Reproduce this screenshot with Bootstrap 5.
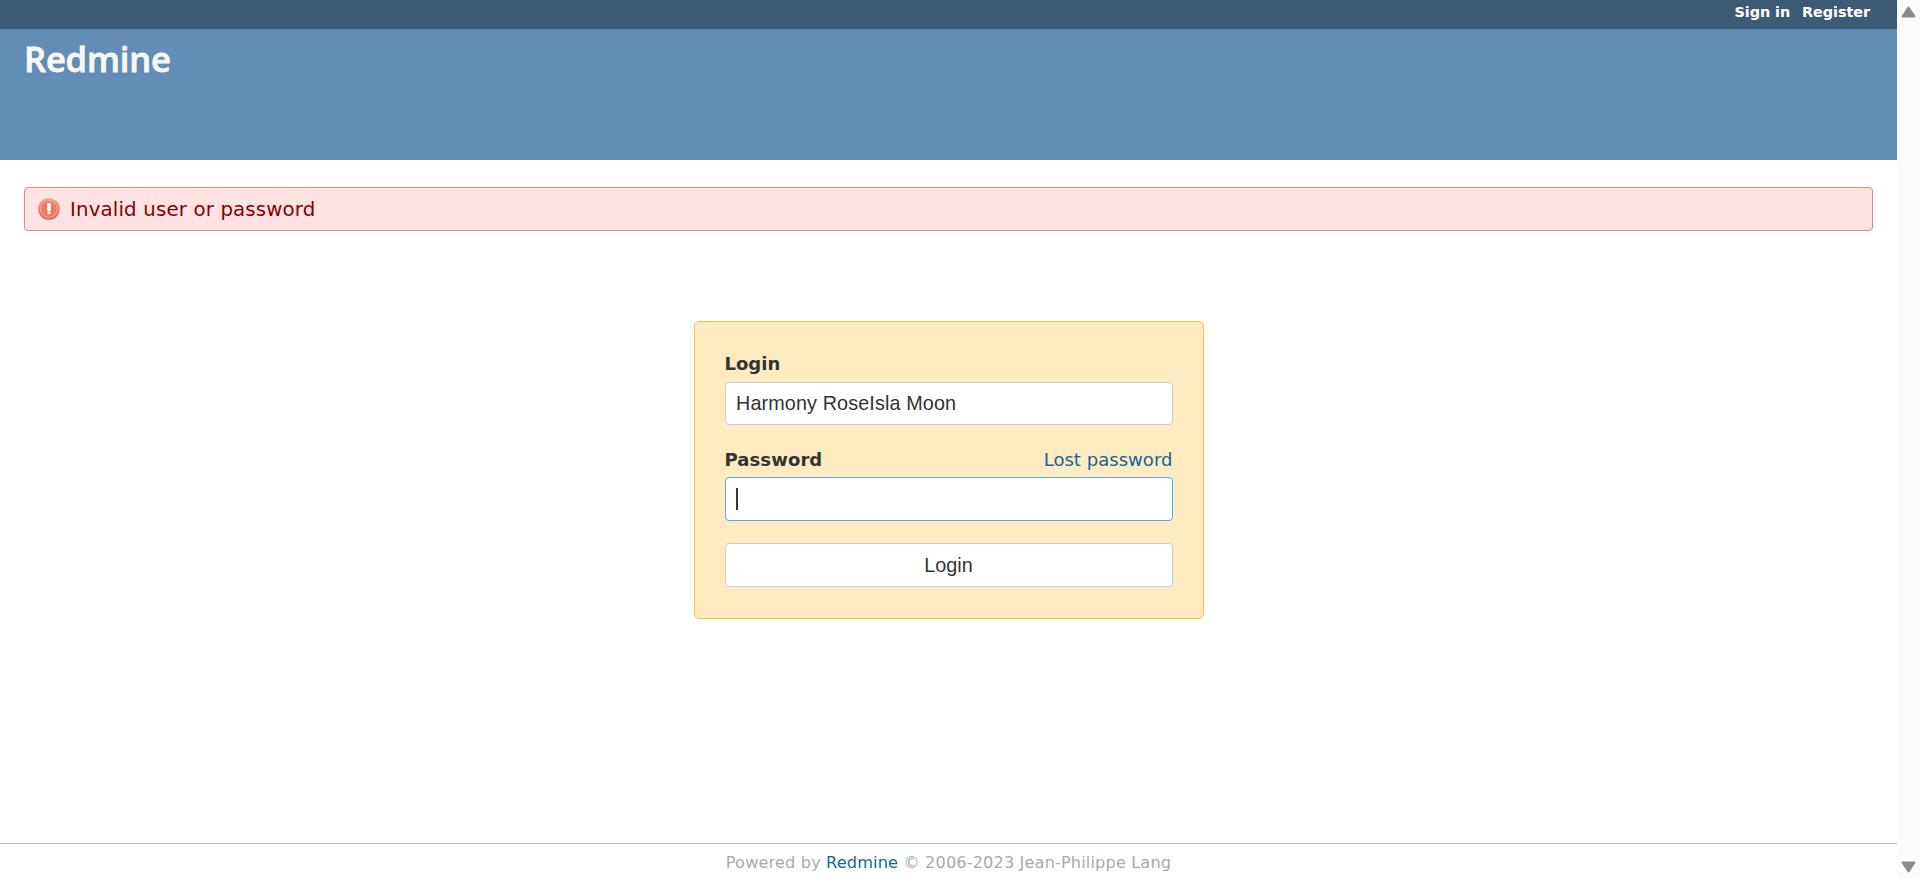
<!DOCTYPE html>
<html lang="en">
<head>
<meta charset="utf-8">
<title>Redmine</title>
<link href="https://cdn.jsdelivr.net/npm/bootstrap@5.3.0/dist/css/bootstrap.min.css" rel="stylesheet">
<style>
body{font:18px/1.25 Verdana,"DejaVu Sans",sans-serif;color:#333;overflow:hidden}
a{color:#169;text-decoration:none}
.top-menu{height:29px;background:#3e5b76;font-size:14.4px;font-weight:700;line-height:18px;padding:3px 27px 0;gap:12px;letter-spacing:-.06px}
.top-menu a{color:#fff}
.site-head{height:131px;background:#628db6;padding:5px 24px 0}
.site-head h1{font:600 34.5px/50px "Open Sans",sans-serif;color:#f8f8f8;letter-spacing:-.15px;-webkit-text-stroke:.8px #f8f8f8}
.flash-error{height:44px;margin:27px 24px 0;padding:0 13px;background:#ffe3e3;border:1px solid #d88;border-radius:4px;color:#800;font-size:19.8px;gap:10px}
.flash-text{letter-spacing:.15px;padding-top:2px}
.login-box{width:510px;height:298px;margin:90px auto 0;padding:30px;background:#ffebc1;border:1px solid #fdbf3b;border-radius:5px}
.login-box .label-row{height:30px;line-height:24px}
.login-box .password-row{margin-top:23px;height:29px}
.login-box .password-row b{letter-spacing:.1px}
.login-box .password-row a{letter-spacing:.04px}
.login-box .form-control,.login-box .btn{height:44px;padding:0 10px;border:1px solid #ccc;border-radius:4px;background:#fff;color:#333;font:19.8px/40px "Liberation Sans",Arial,sans-serif}
.login-box .form-control.short-field{height:43px;padding-left:10.5px;letter-spacing:.12px}
.login-box .active-field{border-color:#5ad}
.login-box .btn{margin-top:22px}
.text-caret{width:2px;height:22px;background:#333}
.site-foot{height:35px;border-top:1px solid #bbb;color:#aaa;font-size:16.2px;line-height:20px;padding-top:9px;letter-spacing:.12px}
.scroll-track{width:23px;background:#fcfcfc;padding:6px 4px 5px}
</style>
</head>
<body>
<div class="d-flex vh-100">
  <div class="d-flex flex-column flex-grow-1">
    <nav class="top-menu d-flex justify-content-end"><a href="#">Sign in</a><a href="#">Register</a></nav>
    <header class="site-head"><h1 class="m-0">Redmine</h1></header>
    <main class="flex-grow-1">
      <div class="flash-error d-flex align-items-center">
        <svg width="22" height="22" viewBox="0 0 22 22">
          <defs><linearGradient id="g" x1="0" y1="0" x2="0" y2="1"><stop offset="0" stop-color="#f6a08a"/><stop offset="1" stop-color="#d9655a"/></linearGradient></defs>
          <circle cx="11" cy="11" r="10.8" fill="url(#g)"/>
          <circle cx="11" cy="11" r="8.4" fill="#ee7a64" stroke="#f5a392" stroke-width="1.2"/>
          <path d="M9.2 5h3.6v7.8H9.2z" fill="#fff"/><rect x="9.5" y="13.6" width="3" height="2.6" rx=".8" fill="#fff"/>
        </svg>
        <span class="flash-text">Invalid user or password</span>
      </div>
      <form class="login-box">
        <div class="label-row fw-bold">Login</div>
        <input class="form-control short-field shadow-none" type="text" value="Harmony RoseIsla Moon">
        <div class="label-row password-row d-flex justify-content-between"><b>Password</b><a href="#">Lost password</a></div>
        <div class="form-control active-field d-flex align-items-center"><span class="text-caret"></span></div>
        <button class="btn w-100 d-block" type="button">Login</button>
      </form>
    </main>
    <footer class="site-foot text-center">Powered by <a href="#">Redmine</a> © 2006-2023 Jean-Philippe Lang</footer>
  </div>
  <div class="scroll-track d-flex flex-column justify-content-between">
    <svg width="15" height="12" viewBox="0 0 15 12"><path d="M7.5 1.5 13.5 10.5h-12z" fill="#8b8b8b" stroke="#8b8b8b" stroke-width="2" stroke-linejoin="round"/></svg>
    <svg width="15" height="12" viewBox="0 0 15 12"><path d="M7.5 10.5 13.5 1.5h-12z" fill="#8b8b8b" stroke="#8b8b8b" stroke-width="2" stroke-linejoin="round"/></svg>
  </div>
</div>
<script src="https://cdn.jsdelivr.net/npm/bootstrap@5.3.0/dist/js/bootstrap.bundle.min.js"></script>
</body>
</html>
